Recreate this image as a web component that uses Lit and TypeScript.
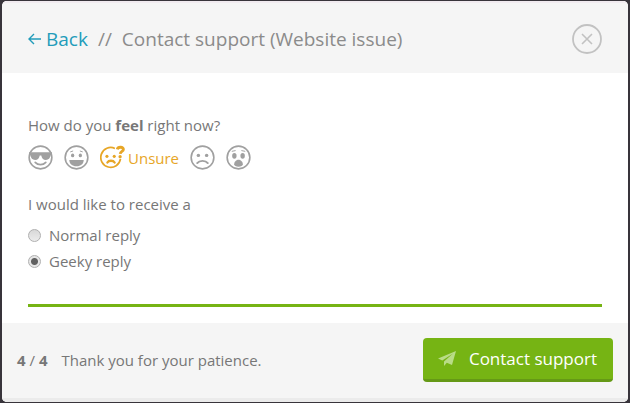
import { LitElement, html, svg, css, nothing } from "lit";
import { customElement, state } from "lit/decorators.js";

const face = svg`<circle cx="13" cy="13" r="11.8" fill="none" stroke="currentColor" stroke-width="1.7"/>`;

const moods = [
  {
    name: "Great",
    art: svg`${face}
      <path d="M1 7.500h24v2.600l-1.500.6c-.6 3.400-2 4.800-4.800 4.800-3 0-4.400-1.900-4.900-4.700h-1.600c-.5 2.800-1.900 4.700-4.900 4.700-2.800 0-4.200-1.400-4.800-4.800L1 10.100z" fill="currentColor"/>
      <path d="M7.500 18c3 3.200 8 3.200 11 0" fill="none" stroke="currentColor" stroke-width="1.800" stroke-linecap="round"/>`,
  },
  {
    name: "Happy",
    art: svg`${face}
      <path d="M5.500 15.500h15c0 4-3 6.500-7.500 6.500s-7.500-2.500-7.500-6.500z" fill="currentColor"/>
      <ellipse cx="9" cy="10.800" rx="1.700" ry="2" fill="currentColor"/>
      <ellipse cx="17" cy="10.800" rx="1.700" ry="2" fill="currentColor"/>
      <path d="M6.500 7.200l3-1M19.500 7.200l-3-1" stroke="currentColor" stroke-width="1"/>`,
  },
  {
    name: "Unsure",
    art: svg`<path d="M15.500 3.600A10.300 10.300 0 1 0 21.300 14.500" fill="none" stroke="currentColor" stroke-width="1.800"/>
      <circle cx="7.200" cy="11.800" r="1.600" fill="currentColor"/>
      <circle cx="14.800" cy="11.800" r="1.600" fill="currentColor"/>
      <path d="M7.700 18.200c1.300-2.400 6-2.400 7.500 0" fill="none" stroke="currentColor" stroke-width="2.400" stroke-linecap="round"/>
      <path d="M18 4.600c.8-3.200 6.600-2.800 6.300.2-.2 2-3.100 1.800-3.300 4.400" fill="none" stroke="currentColor" stroke-width="3"/>
      <circle cx="20.900" cy="12.200" r="1.700" fill="currentColor"/>`,
  },
  {
    name: "Sad",
    art: svg`${face}
      <circle cx="8.700" cy="10.800" r="1.800" fill="currentColor"/>
      <circle cx="17.300" cy="10.800" r="1.800" fill="currentColor"/>
      <path d="M7.500 18.800c2.300-3.100 8.700-3.100 11 0" fill="none" stroke="currentColor" stroke-width="2" stroke-linecap="round"/>`,
  },
  {
    name: "Shocked",
    art: svg`${face}
      <ellipse cx="8.700" cy="11.200" rx="2.300" ry="3" fill="currentColor"/>
      <ellipse cx="17.300" cy="11.200" rx="2.300" ry="3" fill="currentColor"/>
      <path d="M13 15.400c2.500 0 4.500 2.400 4.500 4.600 0 1.800-2 2.500-4.500 2.500s-4.500-.7-4.500-2.500c0-2.200 2-4.600 4.500-4.600z" fill="currentColor"/>
      <path d="M6 6.600l4-.8M20 6.600l-4-.8" stroke="currentColor" stroke-width="1"/>`,
  },
];

@customElement("app-root")
export class AppRoot extends LitElement {
  @state() private mood = "Unsure";
  @state() private reply = "Geeky reply";

  static styles = css`
    :host {
      display: flex;
      box-sizing: border-box;
      min-height: 100vh;
      padding: 1px 2px;
      background: #38343b;
      font: 15px/20px "Open Sans", sans-serif;
      color: #777;
    }
    .card {
      flex: 1;
      display: flex;
      flex-direction: column;
      overflow: hidden;
      border-radius: 5px;
      background: #fff;
    }
    header {
      display: flex;
      align-items: center;
      justify-content: space-between;
      padding: 21px 26px 19px;
      border-top: 2px solid #f1ebf0;
      background: #f5f5f5;
    }
    h1 {
      display: flex;
      align-items: center;
      gap: 10px;
      margin: 0;
      font-size: 19px;
      line-height: 30px;
      font-weight: 400;
      color: #8b8b8b;
    }
    .back {
      display: flex;
      align-items: center;
      gap: 5px;
      color: #229cba;
      text-decoration: none;
    }
    button {
      font: inherit;
      color: inherit;
      border: 0;
      padding: 0;
      background: none;
      cursor: pointer;
    }
    svg {
      display: block;
    }
    .close {
      color: #c2c2c2;
    }
    main {
      flex: 1;
      padding: 42px 26px 16px;
    }
    p {
      margin: 0;
    }
    .moods {
      display: flex;
      gap: 11px;
      margin: 10px 0 24px;
    }
    .mood {
      display: flex;
      align-items: center;
      gap: 3px;
      color: #a0a0a0;
    }
    .mood.chosen {
      color: #e7a626;
    }
    fieldset {
      border: 0;
      margin: 0;
      padding: 0;
    }
    legend {
      padding: 0;
      margin-bottom: 8px;
    }
    .option {
      display: flex;
      align-items: center;
      gap: 8px;
      line-height: 26px;
    }
    input {
      appearance: none;
      box-sizing: border-box;
      width: 13px;
      height: 13px;
      margin: 0;
      border: 1px solid #b0b0b0;
      border-radius: 50%;
      background: linear-gradient(#d8d8d8, #ececec);
    }
    input:checked {
      background: radial-gradient(circle, #606060 3px, #e6e6e6 4px);
    }
    .progress {
      height: 3px;
      margin-top: 30px;
      background: #76b414;
    }
    footer {
      display: flex;
      align-items: center;
      justify-content: space-between;
      padding: 15px 15px 16px;
      border-bottom: 4px solid #ebebeb;
      background: #f5f5f5;
    }
    .status {
      display: flex;
      gap: 14px;
    }
    .send {
      display: flex;
      align-items: center;
      gap: 13px;
      padding: 0 16px 0 15px;
      border-bottom: 3px solid #659916;
      border-radius: 4px;
      background: #76b414;
      color: #fff;
      font-size: 17px;
      line-height: 41px;
    }
    .plane {
      color: #b9dc86;
    }
  `;

  render() {
    return html`
      <section class="card">
        <header>
          <h1>
            <a class="back" href="#">
              <svg width="13" height="12" viewBox="0 0 13 12" aria-hidden="true">
                <path d="M13 6H1.500M6 1L1 6l5 5" fill="none" stroke="currentColor" stroke-width="1.400"/>
              </svg>Back</a>
            <span>//</span>
            <span>Contact support (Website issue)</span>
          </h1>
          <button class="close" aria-label="Close">
            <svg width="30" height="30" viewBox="0 0 30 30">
              <circle cx="15" cy="15" r="14" fill="none" stroke="currentColor" stroke-width="1.800"/>
              <path d="M10 10l10 10M20 10L10 20" stroke="currentColor" stroke-width="1.600"/>
            </svg>
          </button>
        </header>
        <main>
          <p>How do you <b>feel</b> right now?</p>
          <div class="moods">
            ${moods.map(
              (m) => html`<button
                class="mood ${m.name === this.mood ? "chosen" : ""}"
                aria-label=${m.name}
                aria-pressed=${m.name === this.mood}
                @click=${() => (this.mood = m.name)}
              >
                <svg width="25" height="25" viewBox="0 0 26 26">${m.art}</svg>
                ${m.name === this.mood ? html`<span>${m.name}</span>` : nothing}
              </button>`
            )}
          </div>
          <fieldset>
            <legend>I would like to receive a</legend>
            ${["Normal reply", "Geeky reply"].map(
              (r) => html`<label class="option"
                ><input
                  type="radio"
                  name="reply"
                  .checked=${r === this.reply}
                  @change=${() => (this.reply = r)}
                />${r}</label
              >`
            )}
          </fieldset>
          <div class="progress"></div>
        </main>
        <footer>
          <div class="status">
            <span><b>4</b> / <b>4</b></span>
            <span>Thank you for your patience.</span>
          </div>
          <button class="send">
            <svg class="plane" width="18" height="16" viewBox="0 0 18 16" aria-hidden="true">
              <path d="M18 0L0 7.500l4.300 2L15 2.500 6 10.500V15l2.800-3.300L14 14z" fill="currentColor"/>
            </svg>
            Contact support
          </button>
        </footer>
      </section>
    `;
  }
}
